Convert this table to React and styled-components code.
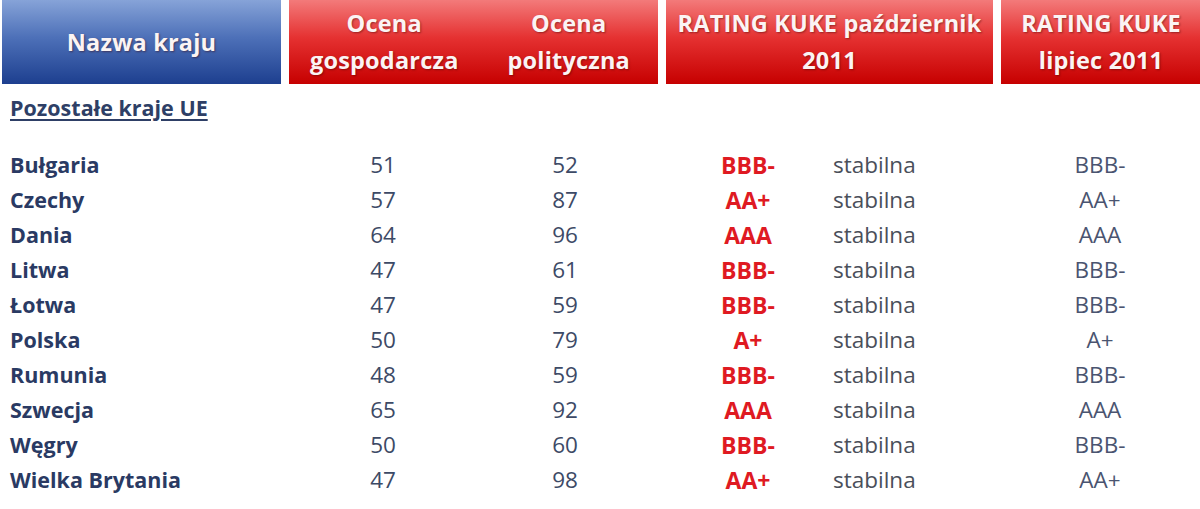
import styled, { createGlobalStyle } from "styled-components";

const GlobalStyle = createGlobalStyle`
  html, body {
    margin: 0;
    padding: 0;
    background: #ffffff;
  }
  body {
    font-family: "Open Sans", "Liberation Sans", sans-serif;
  }
`;

const Page = styled.div`
  width: 1200px;
  height: 509px;
  overflow: hidden;
  background: #fff;
`;

const HeaderRow = styled.div`
  display: flex;
  gap: 8px;
  padding-left: 2px;
  height: 84px;
`;

const HeaderCell = styled.div`
  width: ${({ $w }) => $w}px;
  flex: none;
  display: flex;
  align-items: center;
  justify-content: ${({ $split }) => ($split ? "space-around" : "center")};
  background: ${({ $blue }) =>
    $blue
      ? "linear-gradient(to bottom, #86a3d8 0%, #4d70b8 45%, #1d3f8f 100%)"
      : "linear-gradient(to bottom, #f37a7a 0%, #e53131 45%, #c60000 100%)"};
  color: #fbf4f4;
  font-weight: 700;
  font-size: 23.5px;
  letter-spacing: 0.2px;
  line-height: 37px;
  text-align: center;
  white-space: nowrap;
  text-shadow: 1px 1px 2px rgba(60, 0, 0, 0.45);
`;

const HeadText = styled.div`
  width: ${({ $w }) => ($w ? `${$w}px` : "auto")};
  text-align: center;
`;

const Section = styled.div`
  padding: 9px 0 0 10px;
  height: 42px;
  box-sizing: border-box;
  font-size: 21.5px;
  font-weight: 700;
  color: #2e3f66;
  span {
    text-decoration: underline;
    text-underline-offset: 3px;
    text-decoration-thickness: 2px;
  }
`;

const Body = styled.div`
  padding-top: 21px;
`;

const Row = styled.div`
  display: grid;
  grid-template-columns: 288px 190px 174px 181px 167px 200px;
  height: 35px;
  align-items: center;
  font-size: 22.5px;
`;

const Country = styled.div`
  padding-left: 10px;
  font-size: 21.5px;
  font-weight: 700;
  color: #2a3a63;
`;

const Num = styled.div`
  text-align: center;
  color: #3d4a66;
`;

const Rating = styled.div`
  text-align: center;
  padding-left: 11px;
  font-size: 23px;
  font-weight: 700;
  color: #df1a22;
`;

const Status = styled.div`
  color: #4a4f5a;
`;

const Prev = styled.div`
  text-align: center;
  color: #4a5470;
`;

const rows = [
  ["Bułgaria", 51, 52, "BBB-", "BBB-"],
  ["Czechy", 57, 87, "AA+", "AA+"],
  ["Dania", 64, 96, "AAA", "AAA"],
  ["Litwa", 47, 61, "BBB-", "BBB-"],
  ["Łotwa", 47, 59, "BBB-", "BBB-"],
  ["Polska", 50, 79, "A+", "A+"],
  ["Rumunia", 48, 59, "BBB-", "BBB-"],
  ["Szwecja", 65, 92, "AAA", "AAA"],
  ["Węgry", 50, 60, "BBB-", "BBB-"],
  ["Wielka Brytania", 47, 98, "AA+", "AA+"],
];

export default function App() {
  return (
    <Page>
      <GlobalStyle />
      <HeaderRow>
        <HeaderCell $blue $w={279}>Nazwa kraju</HeaderCell>
        <HeaderCell $w={369} $split>
          <HeadText $w={186}>Ocena<br />gospodarcza</HeadText>
          <HeadText $w={174}>Ocena<br />polityczna</HeadText>
        </HeaderCell>
        <HeaderCell $w={327}>
          <HeadText>RATING KUKE październik<br />2011</HeadText>
        </HeaderCell>
        <HeaderCell $w={200}>
          <HeadText>RATING KUKE<br />lipiec 2011</HeadText>
        </HeaderCell>
      </HeaderRow>
      <Section>
        <span>Pozostałe kraje UE</span>
      </Section>
      <Body>
        {rows.map(([name, g, p, r, prev]) => (
          <Row key={name}>
            <Country>{name}</Country>
            <Num>{g}</Num>
            <Num>{p}</Num>
            <Rating>{r}</Rating>
            <Status>stabilna</Status>
            <Prev>{prev}</Prev>
          </Row>
        ))}
      </Body>
    </Page>
  );
}
